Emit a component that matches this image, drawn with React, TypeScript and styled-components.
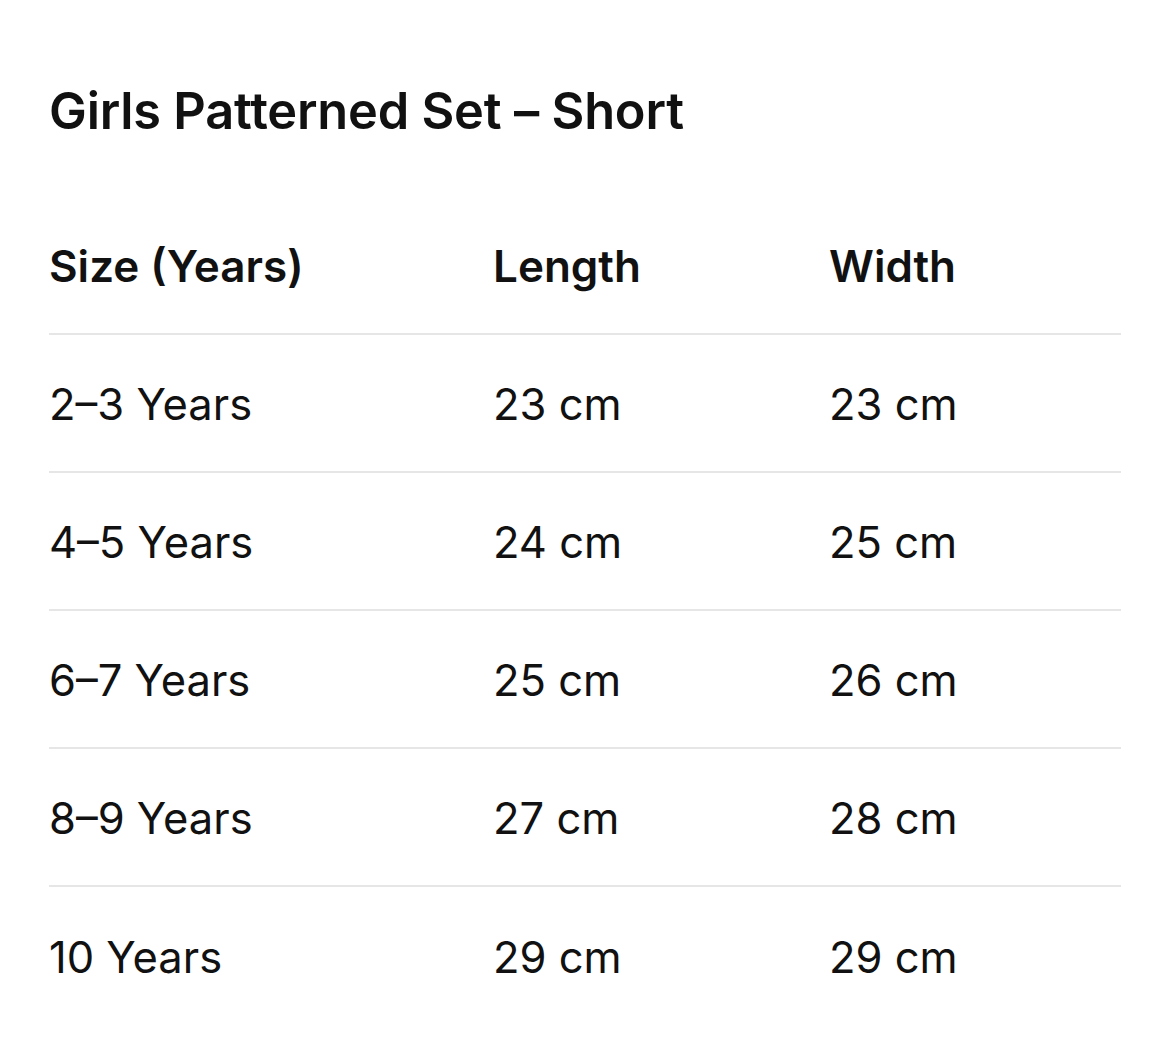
import React from 'react';
import styled, { createGlobalStyle } from 'styled-components';

const GlobalStyle = createGlobalStyle`
  html, body {
    margin: 0;
    padding: 0;
    background: #ffffff;
  }
  body {
    font-family: 'Inter', 'Noto Sans', sans-serif;
    color: #111111;
  }
`;

const Page = styled.div`
  padding: 0 49px;
  width: 1170px;
  box-sizing: border-box;
`;

const Title = styled.h1`
  margin: 0;
  height: 197px;
  padding-top: 83px;
  box-sizing: border-box;
  font-size: 50.5px;
  line-height: 56px;
  font-weight: 600;
  letter-spacing: -0.2px;
`;

const Table = styled.div`
  display: flex;
  flex-direction: column;
`;

const Row = styled.div<{ $last?: boolean }>`
  display: grid;
  grid-template-columns: 444px 336px 1fr;
  align-items: center;
  height: 138px;
  border-bottom: ${(p) => (p.$last ? 'none' : '2px solid #e6e6e6')};
  box-sizing: border-box;
`;

const Cell = styled.div<{ $head?: boolean }>`
  font-size: ${(p) => (p.$head ? '44px' : '43.5px')};
  font-weight: ${(p) => (p.$head ? 600 : 400)};
  line-height: 52px;
  padding-top: 1px;
`;

const rows = [
  ['2–3 Years', '23 cm', '23 cm'],
  ['4–5 Years', '24 cm', '25 cm'],
  ['6–7 Years', '25 cm', '26 cm'],
  ['8–9 Years', '27 cm', '28 cm'],
  ['10 Years', '29 cm', '29 cm'],
];

export default function App() {
  return (
    <>
      <GlobalStyle />
      <Page>
        <Title>Girls Patterned Set – Short</Title>
        <Table>
          <Row>
            <Cell $head>Size (Years)</Cell>
            <Cell $head>Length</Cell>
            <Cell $head>Width</Cell>
          </Row>
          {rows.map((r, i) => (
            <Row key={r[0]} $last={i === rows.length - 1}>
              {r.map((c, j) => (
                <Cell key={j}>{c}</Cell>
              ))}
            </Row>
          ))}
        </Table>
      </Page>
    </>
  );
}
